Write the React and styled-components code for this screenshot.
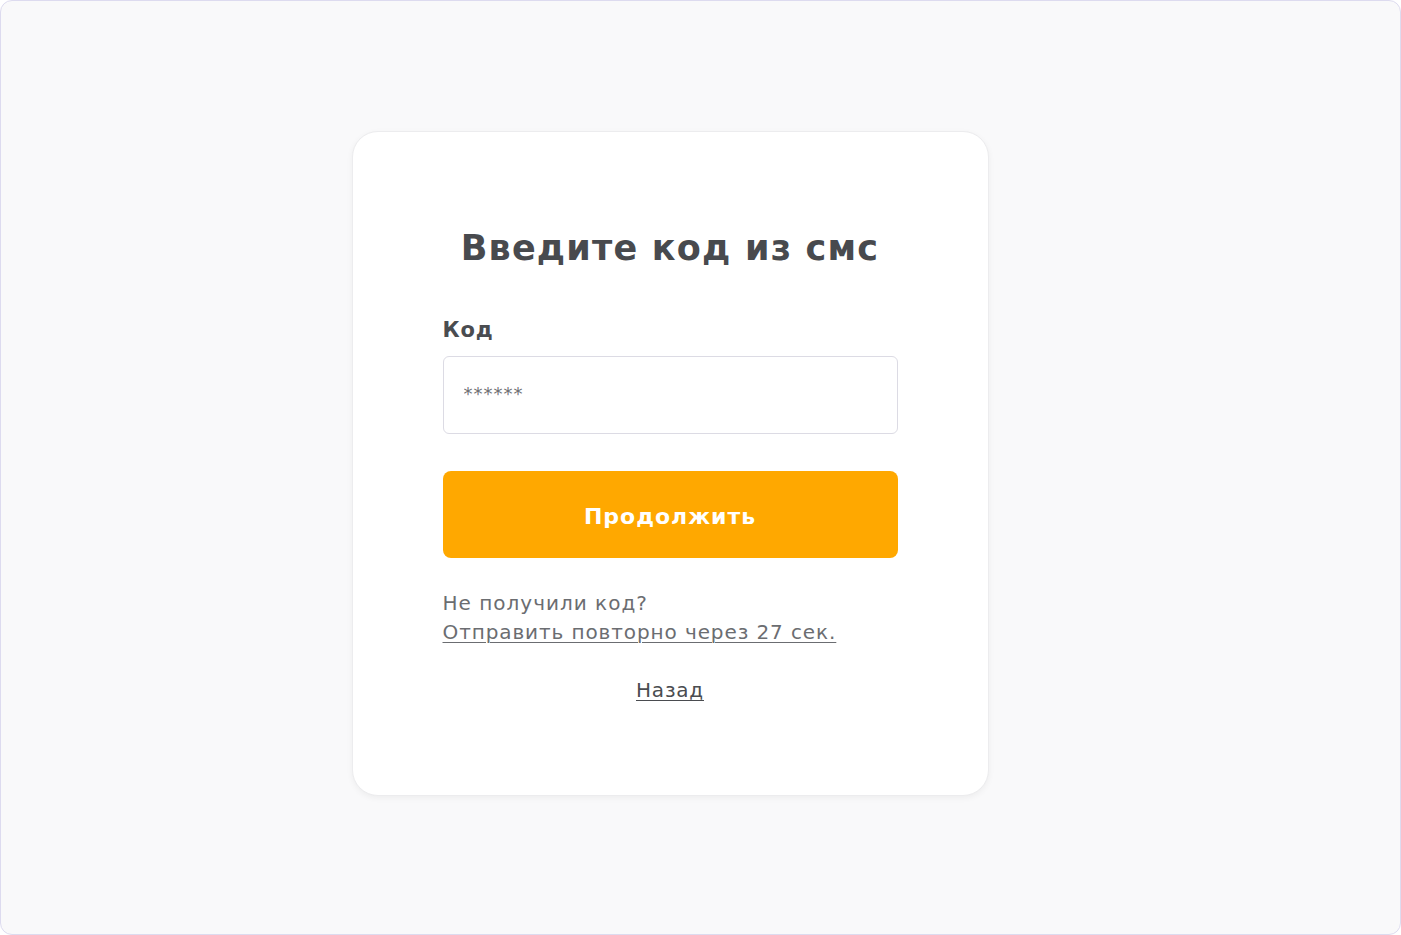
import styled, { createGlobalStyle } from "styled-components"

const Global = createGlobalStyle`
  html, body {
    margin: 0;
    padding: 0;
    background: #ffffff;
  }
  body {
    font-family: "DejaVu Sans", "Noto Sans", sans-serif;
  }
`

const Frame = styled.div`
  box-sizing: border-box;
  width: 1401px;
  height: 935px;
  border: 1px solid #dddbef;
  border-radius: 12px;
  background: #f9f9fa;
  display: flex;
  justify-content: center;
  padding-top: 130px;
  padding-right: 61px;
`

const Card = styled.div`
  box-sizing: border-box;
  width: 637px;
  height: 665px;
  background: #ffffff;
  border: 1px solid #ececee;
  border-radius: 26px;
  box-shadow: 0 2px 6px rgba(0, 0, 0, 0.05);
  padding: 92px 90px 0 90px;
  display: flex;
  flex-direction: column;
`

const Title = styled.h1`
  margin: 0;
  text-align: center;
  font-size: 35px;
  font-weight: 700;
  letter-spacing: 1.2px;
  color: #484a4e;
  line-height: 48px;
`

const Label = styled.label`
  margin-top: 44px;
  font-size: 21px;
  font-weight: 700;
  letter-spacing: 0.8px;
  color: #4a4c50;
  line-height: 28px;
`

const Input = styled.input`
  box-sizing: border-box;
  margin-top: 12px;
  width: 100%;
  height: 78px;
  border: 1.5px solid #dcdbe4;
  border-radius: 6px;
  padding: 0 20px 3px 20px;
  font-family: inherit;
  font-size: 18px;
  letter-spacing: 1px;
  color: #6e7073;
  outline: none;
  &::placeholder {
    color: #6e7073;
  }
`

const Button = styled.button`
  margin-top: 37px;
  height: 87px;
  width: 100%;
  padding-top: 4px;
  border: none;
  border-radius: 8px;
  background: #ffa800;
  color: #ffffff;
  font-family: inherit;
  font-size: 22px;
  font-weight: 700;
  letter-spacing: 1px;
  cursor: pointer;
`

const Note = styled.p`
  margin: 31px 0 0 0;
  font-size: 20px;
  letter-spacing: 1px;
  line-height: 29px;
  color: #6b6d71;
`

const Link = styled.a`
  display: inline-block;
  font-size: 20px;
  letter-spacing: ${(p) => (p.$dark ? "0.8px" : "0.9px")};
  line-height: 29px;
  color: ${(p) => (p.$dark ? "#4a4c50" : "#6b6d71")};
  text-decoration: underline;
  text-underline-offset: 3px;
  text-decoration-thickness: 1px;
  cursor: pointer;
`

const Back = styled.div`
  margin-top: 29px;
  text-align: center;
`

export default function App() {
  return (
    <>
      <Global />
      <Frame>
        <Card>
          <Title>Введите код из смс</Title>
          <Label>Код</Label>
          <Input placeholder="******" />
          <Button>Продолжить</Button>
          <Note>
            Не получили код?
            <br />
            <Link>Отправить повторно через 27 сек.</Link>
          </Note>
          <Back>
            <Link $dark>Назад</Link>
          </Back>
        </Card>
      </Frame>
    </>
  )
}
